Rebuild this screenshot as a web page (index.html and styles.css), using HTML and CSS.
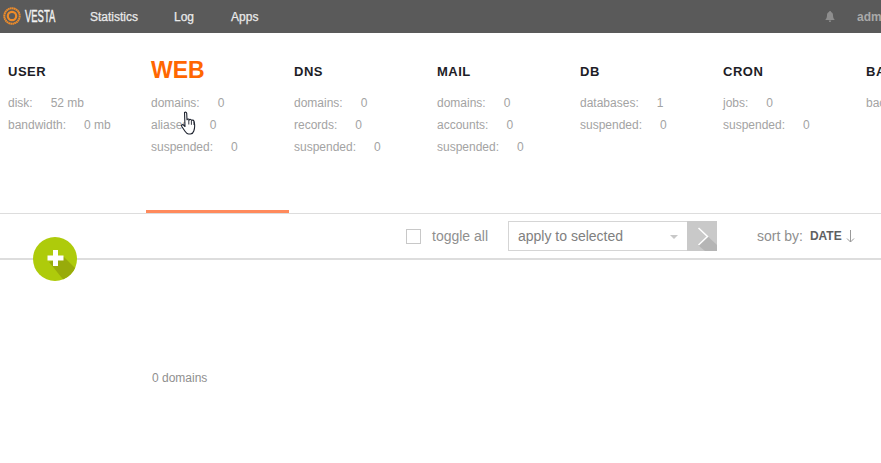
FILE: index.html
```html
<!DOCTYPE html>
<html lang="en">
<head>
<meta charset="utf-8">
<title>Vesta</title>
<link rel="stylesheet" href="styles.css">
</head>
<body>
<header class="topbar">
  <div class="logo">
    <svg class="logo-mark" width="18" height="18" viewBox="0 0 18 18"><circle cx="9" cy="9" r="7.700" fill="none" stroke="#ee8c2a" stroke-width="2" stroke-dasharray="1.700 .3"/><circle cx="9" cy="9" r="4.200" fill="none" stroke="#ee8c2a" stroke-width="2.200"/></svg>
    <span class="logo-text">VESTA</span>
  </div>
  <nav class="topnav">
    <a class="topnav-stat">Statistics</a>
    <a class="topnav-log">Log</a>
    <a>Apps</a>
  </nav>
  <div class="topright">
    <svg class="bell" width="10" height="11" viewBox="0 0 10 11"><path d="M5 0c.6 0 1 .4 1 .9C7.500 1.400 8 2.700 8 4.200c0 2 .5 3.300 1.500 4.200V9H.5v-.6C1.500 7.500 2 6.200 2 4.200 2 2.700 2.500 1.400 4 .9 4 .4 4.400 0 5 0zM3.800 9.500h2.400C6.200 10.300 5.700 11 5 11s-1.200-.7-1.200-1.500z" fill="#8e8e8e"/></svg>
    <span class="user">admin</span>
  </div>
</header>

<section class="tabs">
  <div class="tab">
    <h2 class="tab-title">USER</h2>
    <p class="stat">disk:<b>52 mb</b></p>
    <p class="stat">bandwidth:<b>0 mb</b></p>
  </div>
  <div class="tab tab-active">
    <h2 class="tab-title">WEB</h2>
    <p class="stat">domains:<b>0</b></p>
    <p class="stat">aliases:<b>0</b></p>
    <p class="stat">suspended:<b>0</b></p>
  </div>
  <div class="tab">
    <h2 class="tab-title">DNS</h2>
    <p class="stat">domains:<b>0</b></p>
    <p class="stat">records:<b>0</b></p>
    <p class="stat">suspended:<b>0</b></p>
  </div>
  <div class="tab">
    <h2 class="tab-title">MAIL</h2>
    <p class="stat">domains:<b>0</b></p>
    <p class="stat">accounts:<b>0</b></p>
    <p class="stat">suspended:<b>0</b></p>
  </div>
  <div class="tab">
    <h2 class="tab-title">DB</h2>
    <p class="stat">databases:<b>1</b></p>
    <p class="stat">suspended:<b>0</b></p>
  </div>
  <div class="tab">
    <h2 class="tab-title">CRON</h2>
    <p class="stat">jobs:<b>0</b></p>
    <p class="stat">suspended:<b>0</b></p>
  </div>
  <div class="tab">
    <h2 class="tab-title">BACKUP</h2>
    <p class="stat">backups:<b>0</b></p>
  </div>
</section>

<section class="toolbar">
  <label class="toggle"><span class="checkbox"></span>toggle all</label>
  <div class="apply">
    <div class="select">apply to selected<span class="caret"></span></div>
    <div class="go">
      <svg width="30" height="30" viewBox="0 0 30 30"><path d="M11 24 18 30H30V24L21 15.500z" fill="#b5b5b5"/><path d="M11.500 7 20.500 15.500 11.500 24" fill="none" stroke="#fff" stroke-width="1.500"/></svg>
    </div>
  </div>
  <div class="sort">sort by:<b>DATE</b>
    <svg class="arrow" width="9" height="13" viewBox="0 0 9 13"><path d="M4.500 0V12M1 8.500 4.500 12 8 8.500" fill="none" stroke="#9a9a9a" stroke-width="1"/></svg>
  </div>
</section>

<button class="add" aria-label="Add">
  <svg width="44" height="44" viewBox="0 0 44 44"><path d="M16 25 31 20 46 35 33 46z" fill="#98ab0a"/><path d="M20 13h5v5.500h5.500v5H25V29h-5v-5.500h-5.500v-5H20z" fill="#fff"/></svg>
</button>

<p class="count">0 domains</p>

<svg class="cursor" width="16" height="24" viewBox="0 0 16 24"><path d="M3.500 1.500c1-.8 2-.3 2.200.8l.3 6.500c.3-1 2-1 2.300.2.500-.9 2-.8 2.300.5.600-.7 2.100-.5 2.400.8.800 3 .9 6.800-.2 9.700-.5 1.700-1.500 2.700-3.300 3H7.500C5.800 22.800 5 21.800 4 20.300L.8 15.500c-.7-1.200.5-2.500 1.700-1.500l1.500 1.500z" fill="#fff" stroke="#1f2430" stroke-width="1.100" stroke-linejoin="round"/><path d="M7.800 9v4.500M10.400 9.800v4M13 10.500v3.500" fill="none" stroke="#1f2430" stroke-width=".9"/></svg>
</body>
</html>
```
FILE: styles.css
```css
* { box-sizing: border-box; }
html, body { margin: 0; height: 100%; overflow: hidden; }
body { background: #fff; font-family: "Liberation Sans", Arial, sans-serif; font-size: 12px; color: #9a9a9a; position: relative; width: 881px; height: 463px; }

.topbar { height: 33px; background: #5a5a5a; display: flex; align-items: center; white-space: nowrap; padding-left: 3px; }
.logo { display: flex; align-items: center; width: 87px; }
.logo-mark { display: block; margin-right: 4px; margin-top: -1px; flex: none; }
.logo-text { font-family: "Liberation Sans", sans-serif; color: #f2f2f2; font-size: 16px; transform: scaleX(.59); transform-origin: left center; -webkit-text-stroke: .4px #f2f2f2; }
.topnav { display: flex; color: #eaeaea; font-size: 12px; -webkit-text-stroke: .25px #eaeaea; }
.topnav a { display: block; }
.topnav-stat { margin-right: 36px; }
.topnav-log { margin-right: 37px; }
.topright { position: absolute; left: 825px; top: 0; height: 33px; display: flex; align-items: center; }
.bell { display: block; margin-right: 22px; }
.user { color: #a9a9a9; font-weight: bold; }

.tabs { display: flex; height: 181px; padding-left: 3px; border-bottom: 1px solid #ddd; width: 1100px; }
.tab { width: 143px; flex: none; padding: 31px 0 0 5px; position: relative; height: 180px; }
.tab-title { margin: 0 0 13px; font-size: 13px; line-height: 15px; font-weight: bold; color: #1d1d26; letter-spacing: .5px; }
.tab-active { border-bottom: 3px solid #ff8a5c; height: 180px; padding-top: 23px; }
.tab-active .tab-title { font-size: 23px; line-height: 28px; color: #ff6701; letter-spacing: 0; margin-bottom: 8px; }
.stat { margin: 0; height: 22px; line-height: 22px; color: #a3a3a3; white-space: nowrap; }
.stat b { font-weight: normal; margin-left: 18px; }

.toolbar { height: 46px; border-bottom: 2px solid #ddd; display: flex; align-items: flex-start; padding: 7px 0 0 406px; position: relative; }
.toggle { display: flex; align-items: center; height: 30px; font-size: 14px; color: #8f8f8f; width: 102px; }
.checkbox { width: 15px; height: 15px; border: 1px solid #c8c8c8; margin-right: 11px; flex: none; }
.apply { display: flex; width: 209px; height: 30px; }
.select { width: 179px; height: 30px; border: 1px solid #d5d5d5; border-right: 0; font-size: 14px; line-height: 28px; padding-left: 9px; color: #808080; position: relative; }
.caret { position: absolute; right: 9px; top: 13px; border: 4px solid transparent; border-top-color: #c8c8c8; border-bottom: 0; }
.go { width: 30px; height: 30px; background: #c9c9c9; overflow: hidden; }
.go svg { display: block; }
.sort { margin-left: 40px; height: 30px; line-height: 30px; font-size: 14px; color: #8f8f8f; white-space: nowrap; display: flex; align-items: center; }
.sort b { font-size: 12px; color: #606060; margin-left: 7px; }
.arrow { display: block; margin-left: 4px; margin-top: 1px; }

.add { position: absolute; left: 33px; top: 237px; width: 44px; height: 44px; padding: 0; border: 0; border-radius: 50%; background: #aecb0b; overflow: hidden; }
.add svg { display: block; }

.count { margin: 111px 0 0 152px; font-size: 12px; line-height: 14px; color: #8f8f8f; }

.cursor { position: absolute; left: 181px; top: 111px; }
```
